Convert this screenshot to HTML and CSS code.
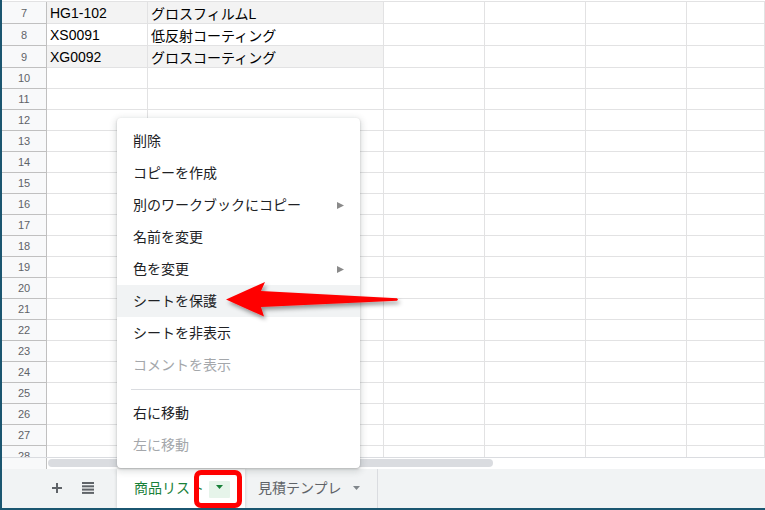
FILE: index.html
```html
<!DOCTYPE html>
<html lang="ja">
<head>
<meta charset="utf-8">
<title>Sheet</title>
<link rel="stylesheet" href="styles.css">
</head>
<body>
<div class="app">
  <div class="sheet">
    <div class="rows">
      <div class="row tall"><div class="rh">7</div><div class="c ca fill">HG1-102</div><div class="c cb fill">グロスフィルムL</div><div class="c cn"></div><div class="c cn"></div><div class="c cn"></div><div class="c cf"></div></div>
      <div class="row tall"><div class="rh">8</div><div class="c ca">XS0091</div><div class="c cb">低反射コーティング</div><div class="c cn"></div><div class="c cn"></div><div class="c cn"></div><div class="c cf"></div></div>
      <div class="row tall"><div class="rh">9</div><div class="c ca fill">XG0092</div><div class="c cb fill">グロスコーティング</div><div class="c cn"></div><div class="c cn"></div><div class="c cn"></div><div class="c cf"></div></div>
      <div class="row"><div class="rh">10</div><div class="c ca"></div><div class="c cb"></div><div class="c cn"></div><div class="c cn"></div><div class="c cn"></div><div class="c cf"></div></div>
      <div class="row"><div class="rh">11</div><div class="c ca"></div><div class="c cb"></div><div class="c cn"></div><div class="c cn"></div><div class="c cn"></div><div class="c cf"></div></div>
      <div class="row"><div class="rh">12</div><div class="c ca"></div><div class="c cb"></div><div class="c cn"></div><div class="c cn"></div><div class="c cn"></div><div class="c cf"></div></div>
      <div class="row"><div class="rh">13</div><div class="c ca"></div><div class="c cb"></div><div class="c cn"></div><div class="c cn"></div><div class="c cn"></div><div class="c cf"></div></div>
      <div class="row"><div class="rh">14</div><div class="c ca"></div><div class="c cb"></div><div class="c cn"></div><div class="c cn"></div><div class="c cn"></div><div class="c cf"></div></div>
      <div class="row"><div class="rh">15</div><div class="c ca"></div><div class="c cb"></div><div class="c cn"></div><div class="c cn"></div><div class="c cn"></div><div class="c cf"></div></div>
      <div class="row"><div class="rh">16</div><div class="c ca"></div><div class="c cb"></div><div class="c cn"></div><div class="c cn"></div><div class="c cn"></div><div class="c cf"></div></div>
      <div class="row"><div class="rh">17</div><div class="c ca"></div><div class="c cb"></div><div class="c cn"></div><div class="c cn"></div><div class="c cn"></div><div class="c cf"></div></div>
      <div class="row"><div class="rh">18</div><div class="c ca"></div><div class="c cb"></div><div class="c cn"></div><div class="c cn"></div><div class="c cn"></div><div class="c cf"></div></div>
      <div class="row"><div class="rh">19</div><div class="c ca"></div><div class="c cb"></div><div class="c cn"></div><div class="c cn"></div><div class="c cn"></div><div class="c cf"></div></div>
      <div class="row"><div class="rh">20</div><div class="c ca"></div><div class="c cb"></div><div class="c cn"></div><div class="c cn"></div><div class="c cn"></div><div class="c cf"></div></div>
      <div class="row"><div class="rh">21</div><div class="c ca"></div><div class="c cb"></div><div class="c cn"></div><div class="c cn"></div><div class="c cn"></div><div class="c cf"></div></div>
      <div class="row"><div class="rh">22</div><div class="c ca"></div><div class="c cb"></div><div class="c cn"></div><div class="c cn"></div><div class="c cn"></div><div class="c cf"></div></div>
      <div class="row"><div class="rh">23</div><div class="c ca"></div><div class="c cb"></div><div class="c cn"></div><div class="c cn"></div><div class="c cn"></div><div class="c cf"></div></div>
      <div class="row"><div class="rh">24</div><div class="c ca"></div><div class="c cb"></div><div class="c cn"></div><div class="c cn"></div><div class="c cn"></div><div class="c cf"></div></div>
      <div class="row"><div class="rh">25</div><div class="c ca"></div><div class="c cb"></div><div class="c cn"></div><div class="c cn"></div><div class="c cn"></div><div class="c cf"></div></div>
      <div class="row"><div class="rh">26</div><div class="c ca"></div><div class="c cb"></div><div class="c cn"></div><div class="c cn"></div><div class="c cn"></div><div class="c cf"></div></div>
      <div class="row"><div class="rh">27</div><div class="c ca"></div><div class="c cb"></div><div class="c cn"></div><div class="c cn"></div><div class="c cn"></div><div class="c cf"></div></div>
      <div class="row"><div class="rh">28</div><div class="c ca"></div><div class="c cb"></div><div class="c cn"></div><div class="c cn"></div><div class="c cn"></div><div class="c cf"></div></div>
    </div>
  </div>

  <div class="hscroll">
    <div class="hs-head"></div>
    <div class="thumb"></div>
  </div>

  <div class="tabbar">
    <div class="tb-btn" aria-label="シートを追加">
      <svg width="10" height="10" viewBox="0 0 10 10"><rect x="4" y="0" width="2" height="10" fill="#5f6368"/><rect x="0" y="4" width="10" height="2" fill="#5f6368"/></svg>
    </div>
    <div class="tb-btn" aria-label="すべてのシート">
      <svg width="12" height="12" viewBox="0 0 12 12"><rect x="0" y="0" width="12" height="2" fill="#5f6368"/><rect x="0" y="3.3" width="12" height="2" fill="#5f6368"/><rect x="0" y="6.6" width="12" height="2" fill="#5f6368"/><rect x="0" y="9.9" width="12" height="2" fill="#5f6368"/></svg>
    </div>
    <div class="tab active">
      <span class="tab-name">商品リスト</span>
      <span class="dd"><svg width="7" height="4" viewBox="0 0 7 4"><polygon points="0,0 7,0 3.5,4" fill="#188038"/></svg></span>
    </div>
    <div class="tab">
      <span class="tab-name">見積テンプレ</span>
      <svg class="tab-caret" width="7" height="4" viewBox="0 0 7 4"><polygon points="0,0 7,0 3.5,4" fill="#80868b"/></svg>
    </div>
  </div>

  <div class="menu">
    <div class="mi">削除</div>
    <div class="mi">コピーを作成</div>
    <div class="mi"><span>別のワークブックにコピー</span><svg class="sub" width="7" height="7" viewBox="0 0 7 7"><polygon points="0,0 7,3.5 0,7" fill="#8a8a8a"/></svg></div>
    <div class="mi">名前を変更</div>
    <div class="mi"><span>色を変更</span><svg class="sub" width="7" height="7" viewBox="0 0 7 7"><polygon points="0,0 7,3.5 0,7" fill="#8a8a8a"/></svg></div>
    <div class="mi hl">シートを保護</div>
    <div class="mi">シートを非表示</div>
    <div class="mi dis">コメントを表示</div>
    <div class="sep"></div>
    <div class="mi">右に移動</div>
    <div class="mi dis">左に移動</div>
  </div>

  <svg class="arrow" width="195" height="56" viewBox="0 0 195 56">
    <defs>
      <filter id="sh" x="-10%" y="-30%" width="130%" height="170%">
        <feDropShadow dx="2" dy="3" stdDeviation="2" flood-color="#000" flood-opacity="0.4"/>
      </filter>
    </defs>
    <polygon filter="url(#sh)" fill="#ff0000" points="11,27.5 50,10 46,19 182,26.3 183,27.5 182,28.7 46,35 49,44.5"/>
  </svg>

  <div class="redbox"></div>
</div>
</body>
</html>
```

FILE: styles.css
```css
html, body {
  margin: 0;
  padding: 0;
}

body {
  width: 765px;
  height: 510px;
  overflow: hidden;
  background: #ffffff;
  font-family: "Liberation Sans", Arial, "Noto Sans CJK JP", sans-serif;
}

.app {
  position: relative;
  width: 763px;
  height: 508px;
  border-left: 2px solid #1b5670;
  border-bottom: 2px solid #1b5670;
  overflow: hidden;
  background: #ffffff;
}

/* grid */
.sheet {
  height: 457px;
  overflow: hidden;
}

.rows {
  margin-top: 1px;
  border-top: 1px solid #e2e2e3;
}

.row {
  display: flex;
  height: 21px;
}

.row.tall {
  height: 22px;
}

.rh {
  box-sizing: border-box;
  flex: none;
  width: 45px;
  background: #f8f9fa;
  border-right: 1px solid #c0c0c0;
  border-bottom: 1px solid #c0c0c0;
  color: #5f6368;
  font-size: 11px;
  display: flex;
  align-items: center;
  justify-content: center;
}

.c {
  box-sizing: border-box;
  flex: none;
  border-right: 1px solid #e2e2e3;
  border-bottom: 1px solid #e2e2e3;
  padding-left: 3px;
  font-size: 14px;
  color: #000000;
  display: flex;
  align-items: center;
  white-space: nowrap;
  overflow: hidden;
}

.ca { width: 101px; }
.cb { width: 236px; }
.cn { width: 101px; }
.cf { flex: 1; }

.fill {
  background: #f3f3f3;
}

/* horizontal scrollbar */
.hscroll {
  box-sizing: border-box;
  height: 12px;
  border-top: 1px solid #dadce0;
  display: flex;
}

.hs-head {
  box-sizing: border-box;
  width: 45px;
  background: #f8f9fa;
  border-right: 1px solid #c0c0c0;
}

.thumb {
  margin: 1px 0 0 1px;
  width: 445px;
  height: 8px;
  border-radius: 4px;
  background: #dadce0;
}

/* sheet tabs */
.tabbar {
  height: 39px;
  background: #f1f3f4;
  display: flex;
  padding-left: 40px;
  gap: 1px;
}

.tb-btn {
  width: 30px;
  display: flex;
  align-items: center;
  justify-content: center;
  padding-bottom: 1px;
}

.tab {
  display: flex;
  align-items: center;
  padding: 0 17px 4px 12px;
  color: #5f6368;
  font-family: "Noto Sans CJK JP", sans-serif;
  font-size: 14px;
  border-right: 1px solid #dadce0;
  margin: 0;
}

.tab.active {
  margin-left: 13px;
  padding: 0 15px 4px 17px;
  background: #ffffff;
  color: #188038;
  border-right: none;
  box-shadow: 0 1px 3px 0 rgba(60, 64, 67, 0.25);
}

.tab-name {
  line-height: 20px;
}

.dd {
  margin-left: 5px;
  width: 21px;
  height: 17px;
  margin-top: 6px;
  background: #e6f4ea;
  display: flex;
  align-items: center;
  justify-content: center;
  padding-bottom: 5px;
  box-sizing: border-box;
  border-radius: 1px;
}

.tab-caret {
  margin-left: 11px;
  margin-top: 3px;
}

/* context menu */
.menu {
  position: absolute;
  left: 115px;
  top: 118px;
  width: 243px;
  box-sizing: border-box;
  padding: 7px 0;
  background: #ffffff;
  border-radius: 4px;
  box-shadow: 0 2px 6px 2px rgba(60, 64, 67, 0.15), 0 1px 2px 0 rgba(60, 64, 67, 0.3);
  font-family: "Noto Sans CJK JP", sans-serif;
  font-size: 14px;
  color: #202124;
}

.mi {
  box-sizing: border-box;
  height: 32px;
  padding: 0 16px 3px;
  display: flex;
  align-items: center;
  justify-content: space-between;
}

.mi.hl {
  background: #f1f3f4;
}

.mi.dis {
  color: #a4a7ab;
}

.sub {
  margin-top: 3px;
}

.sep {
  margin: 8px 0 7px 14px;
  height: 1px;
  background: #dadce0;
}

/* annotation overlays */
.arrow {
  position: absolute;
  left: 213px;
  top: 272px;
}

.redbox {
  position: absolute;
  left: 192px;
  top: 470px;
  width: 48px;
  height: 38px;
  box-sizing: border-box;
  border: 5px solid #ff0000;
  border-radius: 7px;
}
```
